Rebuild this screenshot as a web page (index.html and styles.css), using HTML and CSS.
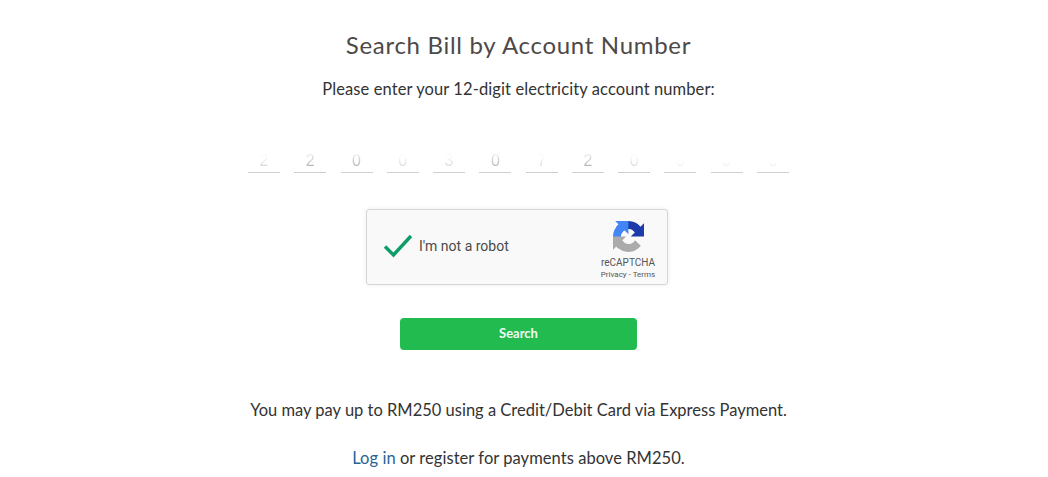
FILE: index.html
```html
<!DOCTYPE html>
<html lang="en">
<head>
<meta charset="utf-8">
<title>Search Bill by Account Number</title>
<link rel="stylesheet" href="styles.css">
</head>
<body>
<main class="page">
  <h1 class="title">Search Bill by Account Number</h1>
  <p class="lead">Please enter your 12-digit electricity account number:</p>
  <div class="digits">
    <span class="digit"><span class="glyph">2</span></span><span class="digit"><span class="glyph strong">2</span></span><span class="digit"><span class="glyph strong">0</span></span><span class="digit"><span class="glyph">0</span></span>
    <span class="digit"><span class="glyph">3</span></span><span class="digit"><span class="glyph strong">0</span></span><span class="digit"><span class="glyph">7</span></span><span class="digit"><span class="glyph strong">2</span></span>
    <span class="digit"><span class="glyph">0</span></span><span class="digit"><span class="glyph faint">0</span></span><span class="digit"><span class="glyph faint">0</span></span><span class="digit"><span class="glyph faint">0</span></span>
  </div>
  <div class="captcha">
    <div class="captcha-main">
      <svg class="tick" viewBox="0 0 30 24" width="30" height="24" aria-hidden="true">
        <path d="M2 12.5 L10.5 21 L28 2" fill="none" stroke="#0f9d67" stroke-width="3.4"/>
      </svg>
      <span class="captcha-label">I'm not a robot</span>
    </div>
    <div class="captcha-brand">
      <svg class="logo" viewBox="0 0 64 64" width="31" height="31" aria-hidden="true">
        <path d="M64 31.955l-.033-1.37V4.687l-7.16 7.16C50.948 4.674 42.033.093 32.05.093c-10.4 0-19.622 4.96-25.458 12.64l11.736 11.86a15.55 15.55 0 0 1 4.754-5.334c2.05-1.6 4.952-2.906 8.968-2.906.485 0 .86.057 1.135.163 4.976.393 9.288 3.14 11.828 7.124l-8.307 8.307c10.522-.04 22.4-.066 27.295.005" fill="#1c3aa9"/>
        <path d="M31.862.094l-1.37.033H4.594l7.16 7.16C4.58 13.147 0 22.06 0 32.046c0 10.4 4.96 19.622 12.64 25.458l11.86-11.736a15.55 15.55 0 0 1-5.334-4.754c-1.6-2.05-2.906-4.952-2.906-8.968 0-.485.057-.86.163-1.135.393-4.976 3.14-9.288 7.124-11.828l8.307 8.307c-.04-10.522-.066-22.4.005-27.295" fill="#4285f4"/>
        <path d="M0 32l.033 1.37v25.898l7.16-7.16c5.86 7.173 14.775 11.754 24.76 11.754 10.4 0 19.622-4.96 25.458-12.64l-11.86-11.736a15.55 15.55 0 0 1-4.754 5.334c-2.05 1.6-4.952 2.906-8.968 2.906-.485 0-.86-.057-1.135-.163-4.976-.393-9.288-3.14-11.828-7.124l8.307-8.307c-10.522.04-22.4.066-27.295-.005" fill="#ababab"/>
      </svg>
      <span class="brand-name">reCAPTCHA</span>
      <span class="brand-links">Privacy - Terms</span>
    </div>
  </div>
  <button class="search" type="button">Search</button>
  <p class="note">You may pay up to RM250 using a Credit/Debit Card via Express Payment.</p>
  <p class="note note-login"><a class="login" href="#">Log in</a> or register for payments above RM250.</p>
</main>
</body>
</html>
```

FILE: styles.css
```css
* { box-sizing: border-box; }
html, body { margin: 0; padding: 0; background: #fff; overflow: hidden; }
body { height: 477px; font-family: "Lato", "Noto Sans", sans-serif; color: #333; }
.page { width: 1037px; display: flex; flex-direction: column; align-items: center; padding-top: 29px; }
.title { margin: 0; font-size: 24px; line-height: 32px; font-weight: 400; color: #4d4947; letter-spacing: 0.7px; }
.lead { margin: 17px 0 0; font-size: 16.5px; line-height: 22px; letter-spacing: 0.1px; }
.digits { width: 541px; margin-top: 49px; display: flex; justify-content: space-between; }
.digit { width: 32px; height: 24px; border-bottom: 1px solid #cfcfcf; font-size: 16px; line-height: 23px; text-align: center; font-family: "Liberation Sans", sans-serif; }
.glyph { display: inline-block; color: transparent; background: linear-gradient(#fbfbfb 35%, #cfcfcf 85%); -webkit-background-clip: text; background-clip: text; }
.strong { background-image: linear-gradient(#f0f0f0 20%, #a8a8a8 85%); }
.faint { background-image: linear-gradient(#fefefe 55%, #e2e2e2 85%); }
.captcha { width: 302px; height: 76px; margin: 36px 3px 0 0; display: flex; justify-content: space-between; background: #f9f9f9; border: 1px solid #d6d6d6; border-radius: 3px; box-shadow: 0 0 4px rgba(0,0,0,0.08); }
.captcha-main { display: flex; align-items: center; padding-left: 16px; gap: 6px; }
.tick { display: block; margin-bottom: 3px; }
.captcha-label { font-family: "Roboto", sans-serif; font-size: 14px; color: #4a4a4a; margin-bottom: 2px; }
.captcha-brand { width: 78px; display: flex; flex-direction: column; align-items: center; padding-top: 11px; font-family: "Roboto", sans-serif; color: #555; }
.logo { display: block; }
.brand-name { margin-top: 4px; font-size: 10px; line-height: 13px; }
.brand-links { font-size: 8px; line-height: 11px; }
.search { width: 237px; height: 32px; margin-top: 33px; padding: 0 0 2px; border: 0; border-radius: 4px; background: #22bb4f; color: #eefcf2; font-family: "Lato", sans-serif; font-size: 13px; font-weight: 700; }
.note { margin: 49px 0 0; font-size: 16.5px; line-height: 22px; }
.note-login { margin-top: 26px; letter-spacing: 0.05px; }
.login { color: #2a6496; text-decoration: none; }
```
